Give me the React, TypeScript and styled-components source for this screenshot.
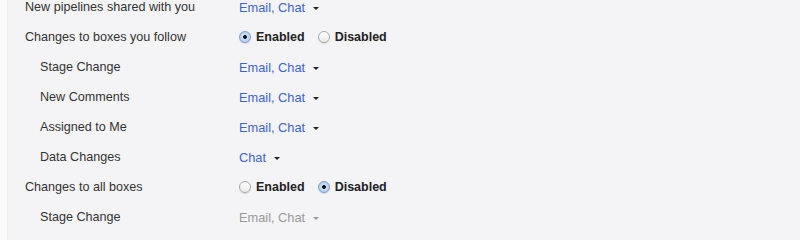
import styled, { createGlobalStyle } from "styled-components";

const Global = createGlobalStyle`
  html, body {
    margin: 0;
    padding: 0;
    background: #f4f3f6;
  }
  body {
    font-family: "Liberation Sans", Arial, sans-serif;
    overflow: hidden;
  }
`;

const Page = styled.div`
  display: flex;
  height: 240px;
  width: 800px;
  overflow: hidden;
`;

const Edge = styled.div`
  width: 7px;
  flex-shrink: 0;
  background: #fafafb;
  border-right: 1px solid #ececef;
`;

const List = styled.div`
  display: flex;
  flex-direction: column;
  margin-top: -8px;
  padding-left: 17px;
`;

const Row = styled.div`
  display: flex;
  align-items: center;
  height: 30px;
  flex-shrink: 0;
`;

const Label = styled.div<{ $sub?: boolean }>`
  width: ${(p) => (p.$sub ? 199 : 214)}px;
  padding-left: ${(p) => (p.$sub ? 15 : 0)}px;
  font-size: 12.6px;
  color: #333;
`;

const Select = styled.div<{ $off?: boolean }>`
  display: flex;
  align-items: center;
  gap: 8px;
  font-size: 12.8px;
  color: ${(p) => (p.$off ? "#9a9a9a" : "#3d63d2")};
`;

const Caret = styled.span<{ $off?: boolean }>`
  width: 0;
  height: 0;
  border-left: 3px solid transparent;
  border-right: 3px solid transparent;
  border-top: 3px solid ${(p) => (p.$off ? "#9a9a9a" : "#222")};
  margin-top: 2px;
`;

const Radios = styled.div`
  display: flex;
  align-items: center;
  gap: 13px;
`;

const Option = styled.label`
  display: flex;
  align-items: center;
  gap: 5px;
  font-size: 12.5px;
  font-weight: bold;
  color: #222;
`;

const Dot = styled.span<{ $on?: boolean }>`
  width: 12px;
  height: 12px;
  box-sizing: border-box;
  border-radius: 50%;
  border: 1px solid ${(p) => (p.$on ? "#7f9fd0" : "#a8a8a8")};
  background: ${(p) =>
    p.$on
      ? "radial-gradient(circle, #1a1a1a 0 1.6px, #cfe0f7 2.2px, #9fbde8 100%)"
      : "linear-gradient(#ffffff, #e9e9e9)"};
  box-shadow: 0 1px 1px rgba(0, 0, 0, 0.12);
`;

function Pick({ value, off }: { value: string; off?: boolean }) {
  return (
    <Select $off={off}>
      {value}
      <Caret $off={off} />
    </Select>
  );
}

function Toggle({ enabled }: { enabled: boolean }) {
  return (
    <Radios>
      <Option>
        <Dot $on={enabled} />
        Enabled
      </Option>
      <Option>
        <Dot $on={!enabled} />
        Disabled
      </Option>
    </Radios>
  );
}

export default function App() {
  return (
    <Page>
      <Global />
      <Edge />
      <List>
        <Row>
          <Label>New pipelines shared with you</Label>
          <Pick value="Email, Chat" />
        </Row>
        <Row>
          <Label>Changes to boxes you follow</Label>
          <Toggle enabled />
        </Row>
        <Row>
          <Label $sub>Stage Change</Label>
          <Pick value="Email, Chat" />
        </Row>
        <Row>
          <Label $sub>New Comments</Label>
          <Pick value="Email, Chat" />
        </Row>
        <Row>
          <Label $sub>Assigned to Me</Label>
          <Pick value="Email, Chat" />
        </Row>
        <Row>
          <Label $sub>Data Changes</Label>
          <Pick value="Chat" />
        </Row>
        <Row>
          <Label>Changes to all boxes</Label>
          <Toggle enabled={false} />
        </Row>
        <Row>
          <Label $sub>Stage Change</Label>
          <Pick value="Email, Chat" off />
        </Row>
        <Row>
          <Label $sub>New Comments</Label>
          <Pick value="Email, Chat" off />
        </Row>
      </List>
    </Page>
  );
}
